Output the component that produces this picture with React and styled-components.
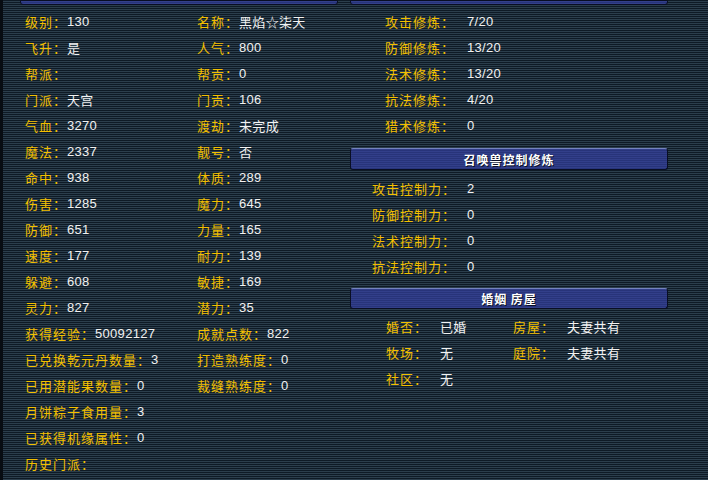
import React from "react";
import styled, { createGlobalStyle } from "styled-components";

const GlobalStyle = createGlobalStyle`
  html, body {
    margin: 0;
    padding: 0;
    background: #16222e;
  }
  body {
    font-family: "Noto Sans CJK SC", "Liberation Sans", sans-serif;
  }
`;

const left = [
  [["级别", "130"], ["名称", "黑焰☆柒天"]],
  [["飞升", "是"], ["人气", "800"]],
  [["帮派", ""], ["帮贡", "0"]],
  [["门派", "天宫"], ["门贡", "106"]],
  [["气血", "3270"], ["渡劫", "未完成"]],
  [["魔法", "2337"], ["靓号", "否"]],
  [["命中", "938"], ["体质", "289"]],
  [["伤害", "1285"], ["魔力", "645"]],
  [["防御", "651"], ["力量", "165"]],
  [["速度", "177"], ["耐力", "139"]],
  [["躲避", "608"], ["敏捷", "169"]],
  [["灵力", "827"], ["潜力", "35"]],
  [["获得经验", "50092127"], ["成就点数", "822"]],
  [["已兑换乾元丹数量", "3"], ["打造熟练度", "0"]],
  [["已用潜能果数量", "0"], ["裁缝熟练度", "0"]],
  [["月饼粽子食用量", "3"]],
  [["已获得机缘属性", "0"]],
  [["历史门派", ""]],
];

const cultivation = [
  ["攻击修炼", "7/20"],
  ["防御修炼", "13/20"],
  ["法术修炼", "13/20"],
  ["抗法修炼", "4/20"],
  ["猎术修炼", "0"],
];

const control = [
  ["攻击控制力", "2"],
  ["防御控制力", "0"],
  ["法术控制力", "0"],
  ["抗法控制力", "0"],
];

const marriage = [
  [["婚否", "已婚"], ["房屋", "夫妻共有"]],
  [["牧场", "无"], ["庭院", "夫妻共有"]],
  [["社区", "无"]],
];

const Screen = styled.div`
  width: 708px;
  height: 480px;
  overflow: hidden;
  box-sizing: border-box;
  border-left: 3px solid #070c12;
  background: repeating-linear-gradient(
    to bottom,
    #0e1a25 0px,
    #0e1a25 1px,
    #2b3e4c 1px,
    #2b3e4c 2px
  );
  display: grid;
  grid-template-columns: 341px 1fr;
`;

const Column = styled.div`
  display: flex;
  flex-direction: column;
`;

const Bar = styled.div`
  box-sizing: border-box;
  height: ${(p) => p.$h}px;
  margin: ${(p) => p.$mt || 0}px 0 0 ${(p) => p.$ml}px;
  width: ${(p) => p.$w}px;
  border: 1px solid #090e24;
  border-top-color: ${(p) => (p.$cut ? "#090e24" : "#7583bd")};
  border-radius: ${(p) => (p.$cut ? "0 0 3px 3px" : "3px")};
  background: repeating-linear-gradient(
    to bottom,
    #323f8a 0px,
    #323f8a 1px,
    #28347a 1px,
    #28347a 2px
  );
  display: flex;
  align-items: center;
  justify-content: center;
  color: #ffffff;
  font-size: 12px;
  font-weight: bold;
  letter-spacing: 1px;
  text-shadow: 1px 1px 0 #0a0f26;
`;

const StatGrid = styled.div`
  display: grid;
  grid-template-columns: ${(p) => p.$cols};
  grid-auto-rows: 26px;
  padding-left: ${(p) => p.$pl}px;
  margin-top: ${(p) => p.$mt}px;
`;

const Cell = styled.div`
  display: flex;
  align-items: center;
  white-space: nowrap;
`;

const Label = styled.span`
  color: #f4c000;
  font-size: 13px;
  letter-spacing: 1px;
  width: ${(p) => (p.$w ? `${p.$w}px` : "auto")};
  flex-shrink: 0;
`;

const Value = styled.span`
  color: #f2f2f2;
  font-size: 13px;
  font-family: "Liberation Sans", "Noto Sans CJK SC", sans-serif;
  letter-spacing: 0.3px;
`;

const Pair = ({ label, value, w }) => (
  <Cell>
    <Label $w={w}>{label}：</Label>
    <Value>{value}</Value>
  </Cell>
);

export default function App() {
  return (
    <>
      <GlobalStyle />
      <Screen>
        <Column>
          <Bar $h={5} $w={318} $ml={17} $cut />
          <StatGrid $cols="172px 1fr" $pl={22} $mt={3}>
            {left.map((row, i) => (
              <React.Fragment key={i}>
                {row.map(([l, v]) => (
                  <Pair key={l} label={l} value={v} />
                ))}
                {row.length === 1 && <Cell />}
              </React.Fragment>
            ))}
          </StatGrid>
        </Column>
        <Column>
          <Bar $h={5} $w={318} $ml={6} $cut />
          <StatGrid $cols="1fr" $pl={41} $mt={3}>
            {cultivation.map(([l, v]) => (
              <Pair key={l} label={l} value={v} w={82} />
            ))}
          </StatGrid>
          <Bar $h={22} $w={318} $ml={6} $mt={10}>
            召唤兽控制修炼
          </Bar>
          <StatGrid $cols="1fr" $pl={28} $mt={5}>
            {control.map(([l, v]) => (
              <Pair key={l} label={l} value={v} w={95} />
            ))}
          </StatGrid>
          <Bar $h={21} $w={318} $ml={6} $mt={9}>
            婚姻 房屋
          </Bar>
          <StatGrid $cols="127px 1fr" $pl={42} $mt={4}>
            {marriage.map((row, i) => (
              <React.Fragment key={i}>
                {row.map(([l, v]) => (
                  <Pair key={l} label={l} value={v} w={54} />
                ))}
              </React.Fragment>
            ))}
          </StatGrid>
        </Column>
      </Screen>
    </>
  );
}
